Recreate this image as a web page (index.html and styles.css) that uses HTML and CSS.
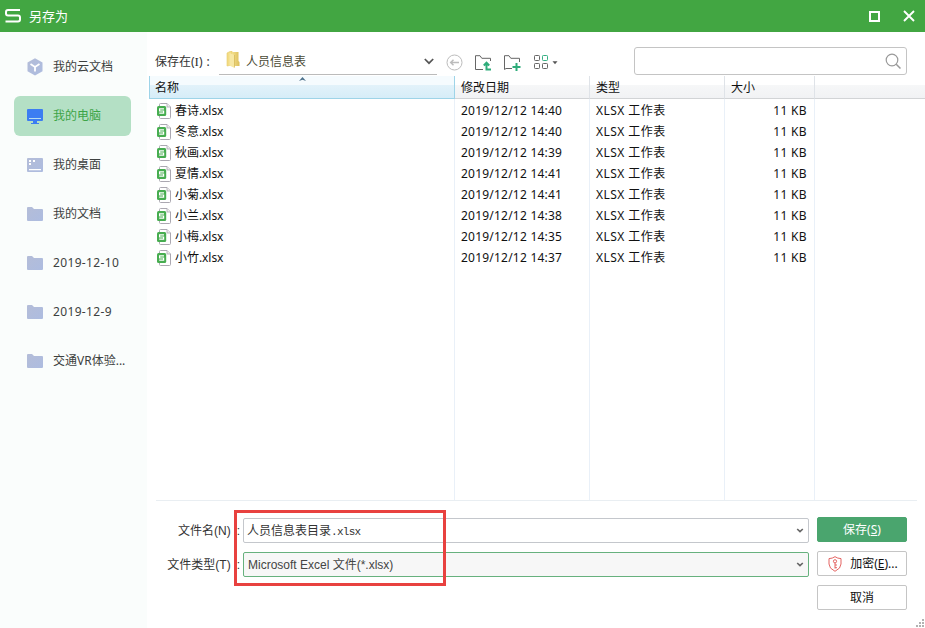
FILE: index.html
```html
<!DOCTYPE html>
<html lang="zh-CN">
<head>
<meta charset="utf-8">
<title>另存为</title>
<link rel="stylesheet" href="styles.css">
</head>
<body>
<svg class="defs" width="0" height="0">
  <defs>
    <linearGradient id="blue" x1="0" y1="0" x2="1" y2="1"><stop offset="0" stop-color="#b4bdd8"/><stop offset="1" stop-color="#adbce0"/></linearGradient>
    <linearGradient id="gold" x1="0" y1="0" x2="1" y2="0"><stop offset="0" stop-color="#f3df8c"/><stop offset="1" stop-color="#dcbf5c"/></linearGradient>
    <symbol id="folder" viewBox="0 0 16 14"><path fill="url(#blue)" d="M0 1Q0 0 1 0H5L7 2H15Q16 2 16 3V13Q16 14 15 14H1Q0 14 0 13Z"/></symbol>
    <symbol id="sheet" viewBox="0 0 14 16">
      <path d="M2.5 3V1.5Q2.5.5 3.5.5H10L13.5 4V14.5Q13.5 15.5 12.5 15.5H3.5Q2.5 15.5 2.5 14.5V13" fill="#fff" stroke="#aba8b1"/>
      <path d="M10 .5V4H13.5" fill="#eee" stroke="#aaa6b0" stroke-width=".8"/>
      <rect x="0" y="3" width="9.2" height="10" rx="1.5" fill="#47ad50"/>
      <path d="M7 5.8H2.6V8H6.6V10.2H2.2" fill="none" stroke="#fff" stroke-width="1.2"/>
    </symbol>
    <symbol id="chev" viewBox="0 0 8 5"><path d="M1.2 1L4 3.7L6.8 1" fill="none" stroke="#666" stroke-width="1.6"/></symbol>
  </defs>
</svg>
<div class="window">
  <header class="titlebar">
    <svg class="logo" width="16" height="14" viewBox="0 0 16 14"><path d="M15 1H3Q1 1 1 3V4.5Q1 6.5 3 6.5H13Q15 6.5 15 8.5V10.5Q15 12.5 13 12.5H.5" fill="none" stroke="#fff" stroke-width="2"/></svg>
    <h1>另存为</h1>
    <svg class="max" width="11" height="11" viewBox="0 0 11 11"><rect x="1" y="1" width="9" height="9" fill="none" stroke="#fff" stroke-width="2"/></svg>
    <svg class="close" width="12" height="12" viewBox="0 0 12 12"><path d="M1 1L11 11M11 1L1 11" stroke="#fff" stroke-width="1.9"/></svg>
  </header>
  <div class="body">
    <nav class="sidebar">
      <div class="place"><svg width="16" height="18" viewBox="0 0 16 18"><path fill="url(#blue)" d="M8 .3L15.5 4.5V13.2L8 17.5L.5 13.2V4.5Z"/><path d="M3.5 6L8 9L12.5 6M8 9V13.5" fill="none" stroke="#fff" stroke-width="1.8"/></svg><span>我的云文档</span></div>
      <div class="place active"><svg width="16" height="15" viewBox="0 0 16 15"><path fill="#3c7df2" d="M1 0H15Q16 0 16 1V11Q16 12 15 12H10V14H12V15H4V14H6V12H1Q0 12 0 11V1Q0 0 1 0Z"/><path d="M2 9.5H14" stroke="#b5dcf0"/></svg><span>我的电脑</span></div>
      <div class="place"><svg width="16" height="14" viewBox="0 0 16 14"><rect width="16" height="14" rx="1" fill="url(#blue)"/><path fill="#fff" d="M2 2h2v2H2zM6 2h2v2H6zM2 5h2v2H2zM2 11h12v1.3H2z"/></svg><span>我的桌面</span></div>
      <div class="place"><svg width="16" height="14"><use href="#folder"/></svg><span>我的文档</span></div>
      <div class="place num"><svg width="16" height="14"><use href="#folder"/></svg><span>2019-12-10</span></div>
      <div class="place num"><svg width="16" height="14"><use href="#folder"/></svg><span>2019-12-9</span></div>
      <div class="place"><svg width="16" height="14"><use href="#folder"/></svg><span>交通VR体验...</span></div>
    </nav>
    <main class="main">
      <div class="toolbar">
        <label class="savein">保存在(<span class="serif">I</span>)<span class="colon">:</span></label>
        <div class="location">
          <svg width="14" height="17" viewBox="0 0 14 17"><path d="M1 2L5 0H6V14L1 15Z" fill="#f3dc85" stroke="#e6c967" stroke-width=".6"/><path d="M6 1H12.5V10L13.5 11V15H6Z" fill="url(#gold)"/><path d="M3.5 2L8.5 4V17L3.5 14.5Z" fill="#f7e8a4"/><path d="M8.5 4V16.5" stroke="#d3b452" stroke-width=".7"/></svg>
          <span>人员信息表</span>
          <svg class="drop" width="10" height="7" viewBox="0 0 10 7"><path d="M.8 1L5 5.2L9.2 1" fill="none" stroke="#555" stroke-width="1.7"/></svg>
        </div>
        <div class="tools">
          <svg width="17" height="17" viewBox="0 0 17 17"><circle cx="8.5" cy="8.5" r="7.5" fill="none" stroke="#bcbcbc"/><path d="M13 8.5H4.5M7.5 5.7L4.7 8.5L7.5 11.3" fill="none" stroke="#bcbcbc" stroke-width="1.5"/></svg>
          <svg width="17" height="16" viewBox="0 0 17 16"><path d="M8 14.5H.5V.7H5L6.8 3.3H15.5V6" fill="none" stroke="#666"/><path d="M11.5 15V8M8.8 10.5L11.5 7.7L14.2 10.5M10.5 14.5H16" fill="none" stroke="#2eac7a" stroke-width="2"/></svg>
          <svg width="18" height="16" viewBox="0 0 18 16"><path d="M8 13.5H2L.5 14.5V.7H5L6.8 3.3H15.5V7" fill="none" stroke="#666"/><path d="M12.5 8V16M8.5 12H16.5" stroke="#2eac7a" stroke-width="2"/></svg>
          <svg width="25" height="15" viewBox="0 0 25 15"><g fill="none" stroke="#666"><rect x=".5" y=".5" width="5" height="5" rx=".8"/><rect x=".5" y="8.5" width="5" height="5" rx=".8"/><rect x="8.5" y="8.5" width="5" height="5" rx=".8"/><rect x="8.5" y=".5" width="5" height="5" rx=".8" stroke="#35b083"/></g><path d="M18.5 6.3H23.5L21 9.2Z" fill="#555"/></svg>
        </div>
        <div class="search"><svg width="17" height="17" viewBox="0 0 17 17"><circle cx="7" cy="7" r="5.8" fill="none" stroke="#999" stroke-width="1.2"/><path d="M11.2 11.2L15.5 15.5" stroke="#999" stroke-width="1.5"/></svg></div>
      </div>
      <section class="files">
        <div class="col name"><div class="head">名称<svg class="sort" width="7" height="4" viewBox="0 0 7 4"><path d="M0 4L3.5 0L7 4L3.5 2.8Z" fill="#4c708b"/></svg></div>
          <div class="cell"><svg width="14" height="16"><use href="#sheet"/></svg>春诗.xlsx</div>
          <div class="cell"><svg width="14" height="16"><use href="#sheet"/></svg>冬意.xlsx</div>
          <div class="cell"><svg width="14" height="16"><use href="#sheet"/></svg>秋画.xlsx</div>
          <div class="cell"><svg width="14" height="16"><use href="#sheet"/></svg>夏情.xlsx</div>
          <div class="cell"><svg width="14" height="16"><use href="#sheet"/></svg>小菊.xlsx</div>
          <div class="cell"><svg width="14" height="16"><use href="#sheet"/></svg>小兰.xlsx</div>
          <div class="cell"><svg width="14" height="16"><use href="#sheet"/></svg>小梅.xlsx</div>
          <div class="cell"><svg width="14" height="16"><use href="#sheet"/></svg>小竹.xlsx</div>
        </div>
        <div class="col date"><div class="head">修改日期</div>
          <div class="cell">2019/12/12 14:40</div><div class="cell">2019/12/12 14:40</div><div class="cell">2019/12/12 14:39</div><div class="cell">2019/12/12 14:41</div><div class="cell">2019/12/12 14:41</div><div class="cell">2019/12/12 14:38</div><div class="cell">2019/12/12 14:35</div><div class="cell">2019/12/12 14:37</div>
        </div>
        <div class="col type"><div class="head">类型</div>
          <div class="cell">XLSX 工作表</div><div class="cell">XLSX 工作表</div><div class="cell">XLSX 工作表</div><div class="cell">XLSX 工作表</div><div class="cell">XLSX 工作表</div><div class="cell">XLSX 工作表</div><div class="cell">XLSX 工作表</div><div class="cell">XLSX 工作表</div>
        </div>
        <div class="col size"><div class="head">大小</div>
          <div class="cell">11 KB</div><div class="cell">11 KB</div><div class="cell">11 KB</div><div class="cell">11 KB</div><div class="cell">11 KB</div><div class="cell">11 KB</div><div class="cell">11 KB</div><div class="cell">11 KB</div>
        </div>
        <div class="col rest"><div class="head"></div></div>
      </section>
      <footer class="form">
        <div class="fields">
          <div class="field"><label>文件名(N)<i>:</i></label><div class="input filename"><span>人员信息表目录<span class="mono">.xlsx</span></span><svg width="8" height="5"><use href="#chev"/></svg></div></div>
          <div class="field"><label>文件类型(T)<i>:</i></label><div class="input filetype"><span>Microsoft Excel 文件(*.xlsx)</span><svg width="8" height="5"><use href="#chev"/></svg></div></div>
          <div class="highlight"></div>
        </div>
        <div class="buttons">
          <div class="btn primary"><span>保存(<u>S</u>)</span></div>
          <div class="btn encrypt"><svg width="14" height="16" viewBox="0 0 14 16"><path d="M7 .7Q9.5 2.5 13 2.6V8Q13 12.5 7 15.3Q1 12.5 1 8V2.6Q4.5 2.5 7 .7Z" fill="none" stroke="#e46463"/><circle cx="7" cy="5.3" r="1.6" fill="none" stroke="#e46463"/><path d="M7 7V12.5M7 9H9M7 11.7H9" fill="none" stroke="#e46463"/></svg><span>加密(<u>E</u>)...</span></div>
          <div class="btn"><span>取消</span></div>
        </div>
      </footer>
    </main>
  </div>
  <svg class="grip" width="9" height="9" viewBox="0 0 9 9"><path fill="#b2b2b2" d="M6 0h2v2H6zM3 3h2v2H3zM6 3h2v2H6zM0 6h2v2H0zM3 6h2v2H3zM6 6h2v2H6z"/></svg>
</div>
</body>
</html>
```
FILE: styles.css
```css
* { box-sizing: border-box; }
body { margin: 0; font: 12px/18px "Noto Sans", "Noto Sans CJK SC", sans-serif; color: #111; }
svg { flex: none; display: block; }
.defs { position: absolute; }
.window { position: relative; width: 925px; height: 628px; overflow: hidden; background: #fff; display: flex; flex-direction: column; }
.titlebar { height: 32px; flex: none; background: #42a642; color: #fff; display: flex; align-items: center; padding: 0 10px 0 5px; }
.titlebar h1 { margin: 0 0 0 8px; font-size: 13px; font-weight: 400; flex: 1; }
.max { margin-right: 23px; }
.body { flex: 1; display: flex; min-height: 0; }
.sidebar { width: 147px; flex: none; background: #fafdfc; padding: 15px 0 0 14px; display: flex; flex-direction: column; gap: 9px; }
.place { width: 117px; height: 40px; flex: none; display: flex; align-items: center; gap: 10px; padding-left: 13px; border-radius: 6px; white-space: nowrap; color: #3d4140; }
.place.num { letter-spacing: .35px; }
.place.active { background: #b4e0c5; color: #3da447; }
.main { flex: 1; margin-left: 2px; display: flex; flex-direction: column; }
.toolbar { height: 44px; flex: none; display: flex; align-items: flex-start; }
.savein { width: 70px; padding: 21px 0 0 6px; white-space: nowrap; color: #333; }
.serif { font-family: "Liberation Serif"; font-size: 13px; }
.colon { margin-left: 4px; }
.location { width: 218px; height: 43px; border-bottom: 1px solid #bbb; display: flex; align-items: center; gap: 6px; padding: 17px 3px 0 7px; color: #4a4a35; }
.drop { margin-left: auto; }
.location > svg:first-child { margin-top: -4px; }
.tools { display: flex; align-items: center; gap: 12px; margin: 22px 0 0 9px; height: 17px; }
.search { width: 273px; height: 28px; margin: 15px 18px 0 auto; border: 1px solid #c4c4c4; border-radius: 3px; display: flex; justify-content: flex-end; align-items: center; padding-right: 4px; }
.files { height: 424px; flex: none; display: flex; }
.col { border-right: 1px solid #e9f0f8; }
.head { height: 23px; margin-right: -1px; margin-bottom: 1px; padding: 3px 0 0 6px; line-height: 18px; background: linear-gradient(#fff 0 40%, #f6f7f8 41%, #f1f2f4); border-bottom: 1px solid #d2d4d6; border-right: 1px solid #dfe3e8; color: #111; }
.cell { height: 21px; line-height: 21px; padding-left: 6px; display: flex; align-items: center; white-space: nowrap; }
.name { width: 306px; }
.name .head { position: relative; background: linear-gradient(#f5fbfe 0 40%, #e2f2fa 41%, #d6edf8); border-color: #9ed4e8; border-left: 1px solid #9ed4e8; padding-left: 5px; }
.sort { position: absolute; left: 149px; top: 1px; }
.name .cell { padding-left: 8px; gap: 4px; letter-spacing: -.05px; }
.date { width: 135px; }
.date .cell { letter-spacing: .22px; }
.type { width: 135px; }
.type .cell { letter-spacing: .45px; }
.size { width: 90px; }
.size .cell { justify-content: flex-end; padding-right: 7px; letter-spacing: .35px; }
.rest { flex: 1; border: 0; }
.rest .head { border-right: 0; margin-right: 0; }
.form { margin: 0 8px 0 7px; border-top: 1px solid #e9eef2; flex: 1; display: flex; }
.fields { position: relative; width: 653px; padding-top: 17px; display: flex; flex-direction: column; gap: 9px; }
.field { display: flex; height: 25px; align-items: center; color: #333; }
.field label { width: 84px; text-align: right; margin-right: 3px; font-family: "Liberation Sans", "Noto Sans CJK SC", sans-serif; white-space: nowrap; }
.field i { font-style: normal; margin-left: 6px; }
.input { flex: 1; height: 25px; border: 1px solid #c4c7cc; border-radius: 2px; display: flex; align-items: center; justify-content: space-between; padding: 0 4px 0 3px; }
.mono { font: 11px "Liberation Mono", monospace; letter-spacing: -.7px; }
.filetype { border-color: #67b17e; background: #f7f7f7; font-family: "Liberation Sans", "Noto Sans CJK SC", sans-serif; padding-left: 4px; color: #444; }
.highlight { position: absolute; left: 78px; top: 9px; width: 212px; height: 76px; border: 3px solid #e8413f; }
.buttons { width: 90px; margin-left: 8px; padding-top: 16px; display: flex; flex-direction: column; gap: 9px; }
.btn { height: 25px; border: 1px solid #c5c5c5; border-radius: 2px; display: flex; align-items: center; justify-content: center; white-space: nowrap; }
.primary { background: #4aa56e; border-color: #4aa56e; color: #fff; }
.encrypt { gap: 8px; padding-left: 2px; }
.btn u { text-underline-offset: 1px; }
.grip { position: absolute; right: 0; bottom: 0; }
```
